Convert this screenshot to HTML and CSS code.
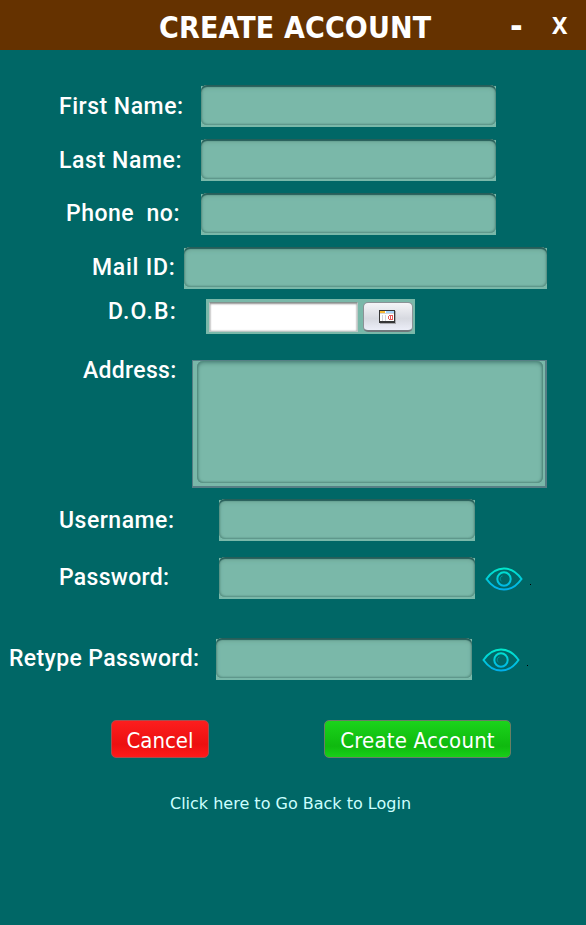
FILE: index.html
```html
<!DOCTYPE html>
<html lang="en">
<head>
<meta charset="utf-8">
<title>Create Account</title>
<link rel="stylesheet" href="styles.css">
</head>
<body>
<svg class="defs" width="0" height="0">
  <defs>
    <linearGradient id="eye-ink" gradientUnits="userSpaceOnUse" x1="0" y1="0" x2="0" y2="26">
      <stop offset="0" stop-color="#00edc8"/>
      <stop offset="1" stop-color="#00a9ee"/>
    </linearGradient>
    <symbol id="eye" viewBox="0 0 38 26">
      <g fill="none" stroke="url(#eye-ink)" stroke-width="2">
        <path d="M1.500 13C6 6.500 12 2.500 19 2.500s13 4 17.500 10.500c-4.500 6.500-10.500 10.500-17.500 10.500S6 19.500 1.500 13z"/>
        <circle cx="19" cy="13" r="6.700"/>
        <path d="M17.500 10c-2.500.7-3 3.600-1 5.300" stroke-width="1" opacity=".4"/>
      </g>
    </symbol>
  </defs>
</svg>
<header class="titlebar">
  <h1 class="title">CREATE ACCOUNT</h1>
  <button class="minimize">-</button>
  <button class="close">X</button>
</header>
<form class="form">
  <div class="row first"><label>First Name:</label><div class="field"></div></div>
  <div class="row last"><label>Last Name:</label><div class="field"></div></div>
  <div class="row phone"><label>Phone&nbsp; no:</label><div class="field"></div></div>
  <div class="row mail"><label>Mail ID:</label><div class="field"></div></div>
  <div class="row dob"><label>D.O.B:</label>
    <div class="date">
      <div class="date-text"></div>
      <button class="date-button" type="button">
        <svg width="18" height="13" viewBox="0 0 18 13" shape-rendering="crispEdges">
          <path d="M1 1h16v13H1z" fill="#a8a8ad"/>
          <path d="M0 0h16v13H0z" fill="#363636"/>
          <path d="M1 1h14v10H1z" fill="#fff"/>
          <path d="M1 1h5v2H1z" fill="#f8b830"/>
          <path d="M7 1h8v2H7z" fill="#a8d4fa"/>
          <path d="M1 3h14v1H1zM3 5h1v6H3zM6 5h1v6H6z" fill="#d4d4d8"/>
          <path d="M9 6h1v3H9zM10 5h4v1h-4zM10 9h4v1h-4zM11 6h1v3h-1zM13 6h1v3h-1z" fill="#e85a5a"/>
        </svg>
      </button>
    </div>
  </div>
  <div class="row address"><label>Address:</label><div class="area"><div class="area-text"></div></div></div>
  <div class="row username"><label>Username:</label><div class="field"></div></div>
  <div class="row password"><label>Password:</label><div class="field"></div><svg class="eye"><use href="#eye"/></svg><span class="dot"></span></div>
  <div class="row retype"><label>Retype Password:</label><div class="field"></div><svg class="eye"><use href="#eye"/></svg><span class="dot"></span></div>
  <div class="actions">
    <button class="action cancel" type="button">Cancel</button>
    <button class="action create" type="button">Create Account</button>
  </div>
  <a class="login">Click here to Go Back to Login</a>
</form>
</body>
</html>
```
FILE: styles.css
```css
* { box-sizing: border-box; }
body {
  margin: 0;
  height: 925px;
  overflow: hidden;
  background: #006766;
  color: #fff;
  font-family: "DejaVu Sans Condensed", "DejaVu Sans", sans-serif;
}
.defs { display: block; }
button { margin: 0; padding: 0; border: 0; background: none; color: inherit; font-family: inherit; }
.titlebar {
  display: flex;
  height: 50px;
  padding-left: 159px;
  background: #653200;
}
.title {
  width: 351px;
  margin: 0;
  padding-top: 4px;
  font: bold 30px/48px "DejaVu Sans Condensed", sans-serif;
  letter-spacing: 0.15px;
  white-space: nowrap;
}
.minimize { width: 42px; text-align: left; font-size: 34px; font-weight: bold; line-height: 48px; }
.close { font: bold 23px/47px "Noto Sans", sans-serif; }
.form { display: flex; flex-direction: column; padding-top: 35px; }
.row { display: flex; align-items: flex-start; height: 42px; margin-bottom: 12px; }
label {
  flex: none;
  padding-top: 1px;
  font: 500 23px/42px Roboto, sans-serif;
  letter-spacing: 0.5px;
  white-space: nowrap;
}
.first label, .last label { width: 142px; margin-left: 59px; }
.last label { letter-spacing: 0.6px; }
.phone label { width: 135px; margin-left: 66px; line-height: 40px; }
.mail label { width: 92px; margin-left: 92px; line-height: 40px; letter-spacing: 0.75px; }
.dob label { width: 98px; margin-left: 108px; line-height: 24px; letter-spacing: 1.2px; }
.address label { width: 109px; margin-left: 83px; line-height: 20px; letter-spacing: 0.3px; }
.username label, .password label { width: 160px; margin-left: 59px; }
.username label { letter-spacing: 0.5px; }
.password label { line-height: 40px; letter-spacing: 0.3px; }
.retype label { width: 207px; margin-left: 9px; line-height: 40px; letter-spacing: 0.38px; }
.row.mail { margin-bottom: 10px; }
.row.dob { height: 35px; margin-bottom: 26px; }
.row.address { height: 128px; margin-bottom: 11px; }
.row.username { margin-bottom: 16px; }
.row.password { margin-bottom: 39px; }
.row.retype { margin-bottom: 39px; }
.field {
  flex: none;
  width: 295px;
  height: 42px;
  background: linear-gradient(#0c6663 1px, #7ab8a9 1px);
}
.field::before {
  content: "";
  display: block;
  height: 40px;
  border-radius: 6px;
  background: #7ab8a9;
  box-shadow: inset 0 2px 1px #265e59, inset 0 3px 4px #6ba394, inset 1px 0 2px #568d80, inset -1px 0 2px #568d80, inset 0 -1px 2px #639d8f;
}
.mail .field { width: 363px; }
.username .field, .password .field, .retype .field { width: 256px; }
.date {
  display: flex;
  width: 209px;
  height: 35px;
  padding: 3px 2px 2px 3px;
  background: #7ab8a9;
}
.date-text {
  width: 149px;
  height: 30px;
  margin-right: 5px;
  border: 1px solid #bbc6c4;
  border-top-color: #85938f;
  background: #fff;
  box-shadow: inset 0 1px 2px #999, inset 0 0 2px #aaa;
}
.date-button {
  display: flex;
  align-items: center;
  justify-content: center;
  width: 50px;
  height: 30px;
  border: 1px solid #8b9296;
  border-bottom: 2px solid #70777b;
  border-radius: 5px;
  background: linear-gradient(#f5f5f8, #d7d9e0 58%, #eceef8);
}
.date-button svg { flex: none; overflow: visible; }
.area {
  width: 355px;
  height: 128px;
  padding: 0 2px 4px 4px;
  border: 1px solid #567f85;
  border-width: 1px 2px 2px 1px;
  background: #7ab8a9;
}
.area-text {
  height: 122px;
  border-radius: 6px;
  box-shadow: inset 0 2px 4px #4f877c, inset 1px 0 2px #568d80, inset -1px 0 2px #568d80, inset 0 -1px 2px #639d8f;
}
.eye { width: 38px; height: 26px; margin: 9px 0 0 10px; }
.dot { width: 1px; height: 1px; margin: 27px 0 0 7px; background: #000; }
.actions { display: flex; justify-content: space-between; width: 400px; height: 39px; margin: 1px 0 0 111px; }
.action {
  height: 38px;
  border: 1px solid #77706a;
  border-radius: 5px;
  font-size: 22px;
  line-height: 39px;
  white-space: nowrap;
}
.cancel { width: 98px; border-color: #a44f4f; background: linear-gradient(#fc1e1e, #ec1010 65%, #ff1a1a); }
.create { width: 187px; border-color: #697f63; background: linear-gradient(#1bd41b, #0fb90f 70%, #18d018); letter-spacing: 0.2px; }
.login {
  align-self: flex-start;
  margin: 35px 0 0 170px;
  color: #ccffff;
  font: 16px/20px "DejaVu Sans", sans-serif;
  white-space: nowrap;
}
```
